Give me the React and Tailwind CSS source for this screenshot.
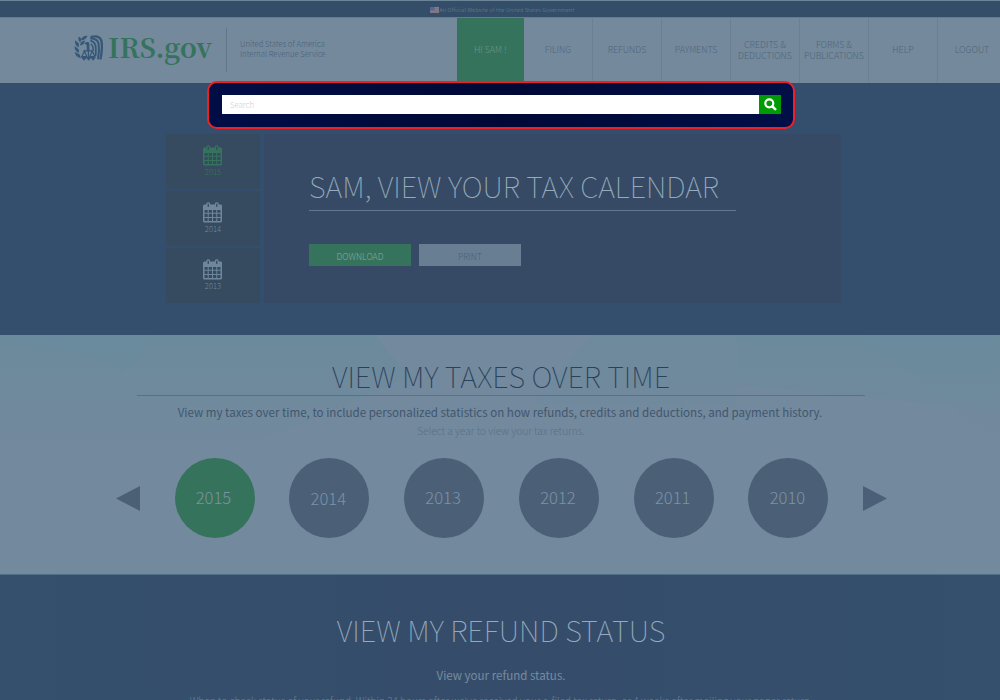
const NAV = [
  { lines: ['FILING'], width: 'w-[69px]' },
  { lines: ['REFUNDS'], width: 'w-[69px]' },
  { lines: ['PAYMENTS'], width: 'w-[69px]' },
  { lines: ['CREDITS &', 'DEDUCTIONS'], width: 'w-[69px]' },
  { lines: ['FORMS &', 'PUBLICATIONS'], width: 'w-[69px]' },
  { lines: ['HELP'], width: 'w-[69px]' },
  { lines: ['LOGOUT'], width: 'w-[69px]' },
];

const CALENDARS = [
  { year: '2015', tone: 'text-[#36735c]' },
  { year: '2014', tone: 'text-[#6f879b]' },
  { year: '2013', tone: 'text-[#6f879b]' },
];

const YEARS = ['2015', '2014', '2013', '2012', '2011', '2010'];

function Flag() {
  return (
    <svg className="h-[6px] w-[9px]" viewBox="0 0 9 6">
      <rect width="9" height="6" fill="#84848f" />
      <path d="M0 1.2h9M0 3.2h9M0 5.2h9" stroke="#7c6673" strokeWidth="0.8" />
      <rect width="4.5" height="3.4" fill="#4a6aa0" />
    </svg>
  );
}

function Eagle() {
  return (
    <svg className="h-[26px] w-[29px]" viewBox="0 0 29 26" fill="none" stroke="#365777" strokeLinecap="round">
      <g fill="#365777" stroke="none">
        <path d="M1 5.200l4 3.200L4.600 12.400C2 11 .6 8.500 1 5.200z" />
        <path d="M.6 11l4.200 3.500v3.500C1.800 16.800.4 14.300.6 11z" />
        <path d="M1 17l4.700 2.500 1.200 3.400C3.400 22.700 1.200 20.500 1 17z" />
        <path d="M4.700 1.500L7 3.300 6.500 8C4.400 6.200 3.900 4.100 4.700 1.500z" />
        <path d="M13.500.8c-3.600-.2-6 1.300-6.600 4.600C10 5.500 12.300 4.100 13.500.8z" />
        <path d="M11 5.600C8.200 6 6.300 7.700 6.100 10.600 9 10.200 10.600 8.600 11 5.600z" />
        <path d="M10.600 8.800c1-1.800 3-2.200 4.600-1.200l.3 8.100h-2.700l-.2-5.700z" />
        <path d="M7 22.300l3 3.400 2.500-2.800 2 2.800 2.500-2.800 2 2.800 3-3.400-3-.4H9.700z" />
      </g>
      <path d="M9.800 15.800h9M14.400 15.500v8M10.400 16l-2.600 5.600h5zM18.300 16l-2.500 5.600h5z" strokeWidth="1.200" />
      <path d="M17.500 1.800C22 .8 26 2 27.300 5.500c1 4.500.8 10.500-.7 18" strokeWidth="2.300" />
      <path d="M17 3.400c4 0 7 2 7.600 5.400.7 4.800.5 9.300-.6 14.700" strokeWidth="2" />
      <path d="M17 5.800c2.800.8 4.500 3 4.700 6.500.3 3.500.2 6-.2 8" strokeWidth="1.800" />
      <path d="M17.200 9.400c1.500 1 2 3 2 5.800" strokeWidth="1.500" />
    </svg>
  );
}

function CalendarIcon() {
  return (
    <svg className="mr-px h-[21px] w-[19px]" viewBox="0 0 19 21" fill="currentColor">
      <path
        fillRule="evenodd"
        d="M1.500 2.500h16A1.400 1.400 0 0 1 19 4v15a1.500 1.500 0 0 1-1.500 1.500h-16A1.500 1.500 0 0 1 0 19V4a1.500 1.500 0 0 1 1.500-1.500z
           M1.500 7.900v2.900h3.200V7.900z M5.700 7.900v2.900h3.300V7.900z M10 7.900v2.900h3.300V7.900z M14.300 7.900v2.900h3.200V7.900z
           M1.500 11.800v3.300h3.200v-3.300z M5.700 11.800v3.300h3.300v-3.300z M10 11.800v3.300h3.300v-3.300z M14.300 11.800v3.300h3.200v-3.300z
           M1.500 16.100v3h3.200v-3z M5.700 16.100v3h3.300v-3z M10 16.100v3h3.300v-3z M14.300 16.100v3h3.200v-3z"
      />
      <rect x="3.300" y="0.300" width="3.900" height="5.900" rx="1.600" />
      <rect x="11.800" y="0.300" width="3.900" height="5.900" rx="1.600" />
      <rect x="4.600" y="1.500" width="1.300" height="3.500" rx="0.500" fill="#364a60" />
      <rect x="13.100" y="1.500" width="1.300" height="3.500" rx="0.500" fill="#364a60" />
    </svg>
  );
}

function SearchIcon() {
  return (
    <svg className="h-[13px] w-[13px]" viewBox="0 0 13 13" fill="none" stroke="#fff">
      <circle cx="5.300" cy="5.300" r="4" strokeWidth="2.200" />
      <path d="M8.600 8.600l2.600 2.600" strokeWidth="2.600" strokeLinecap="round" />
    </svg>
  );
}

function TopBar() {
  return (
    <div className="flex h-[17px] items-center justify-center gap-[1px] border-t border-[#6d8599] bg-[#344e69] pt-[2px] pl-[4px]">
      <Flag />
      <span className="text-[5.400px] font-light leading-[8px] tracking-[0.190px] text-[#6f879b]">
        An Official Website of the United States Government
      </span>
    </div>
  );
}

function Header() {
  return (
    <header className="flex h-[66px] border-t border-[#647d92] bg-[#74899c]">
      <div className="flex w-[457px] shrink-0 pl-[74px]">
        <div className="pt-[17px]">
          <Eagle />
        </div>
        <div className="ml-[5px] pt-[9px] font-['Noto_Serif_CJK_SC','DejaVu_Serif',serif] text-[27px] font-bold leading-[40px] text-[#36735c]">
          IRS.gov
        </div>
        <div className="mt-[10px] ml-auto h-[44px] w-px bg-[#5f778c]" />
        <div className="mr-[131px] ml-[13px] w-[86px] pt-[21px] text-[7.700px] font-light leading-[9.500px] whitespace-nowrap text-[#4a637b]">
          United States of America
          <br />
          Internal Revenue Service
        </div>
      </div>
      <nav className="flex text-center text-[8.850px] font-light leading-[10.800px] text-[#50667a]">
        <div className="mb-px flex w-[66.500px] items-center justify-center bg-[#36735c] text-[#6b948e]">HI SAM !</div>
        {NAV.map((item) => (
          <div
            key={item.lines[0]}
            className={`flex shrink-0 flex-col items-center justify-center border-r border-[#6a8195] pl-px whitespace-nowrap ${item.width}`}
          >
            {item.lines.map((line) => (
              <span key={line}>{line}</span>
            ))}
          </div>
        ))}
      </nav>
    </header>
  );
}

function SearchPanel() {
  return (
    <div className="absolute top-[81px] left-[207px] flex h-[48px] w-[588px] rounded-[10px] border-2 border-[#ec2027] bg-linear-to-r from-[#000e46] via-[#000935] to-[#000f47] pt-[12px] pr-[12px] pl-[13px]">
      <div className="h-[19px] flex-1 bg-white pl-[8px] text-[7.800px] font-light leading-[19px] text-[#cfcfcf]">Search</div>
      <div className="flex h-[19px] w-[22px] items-center justify-center bg-[#009a05]">
        <SearchIcon />
      </div>
    </div>
  );
}

function Hero() {
  return (
    <section className="flex h-[252px] gap-[4px] bg-[#344f6d] pt-[51px] pl-[166px]">
      <div className="flex w-[94px] flex-col gap-[2px]">
        {CALENDARS.map((c) => (
          <div key={c.year} className={`flex h-[55px] flex-col items-center bg-[#364a60] pt-[11px] ${c.tone}`}>
            <CalendarIcon />
            <span className="text-[7.700px] font-light leading-[12px]">{c.year}</span>
          </div>
        ))}
      </div>
      <div className="h-[169px] w-[577px] bg-[#364a65] pl-[45px]">
        <h1 className="w-[427px] border-b border-[#5f788d] pt-[33px] pb-[7px] text-[29.100px] font-thin leading-[36px] whitespace-nowrap text-[#95aabb]">
          SAM, VIEW YOUR TAX CALENDAR
        </h1>
        <div className="mt-[32.500px] flex gap-[8px] text-[8.660px] font-light leading-[25px]">
          <div className="h-[22px] w-[102px] bg-[#36735c] text-center text-[#86a9a0]">DOWNLOAD</div>
          <div className="h-[22px] w-[102px] bg-[#687e92] text-center text-[#4b6177]">PRINT</div>
        </div>
      </div>
    </section>
  );
}

function Taxes() {
  return (
    <section className="relative flex h-[240px] flex-col items-center border-b border-[#4f6f89] bg-[#73899d] pl-[2px]">
      <svg className="absolute inset-0 h-[239px] w-[1000px]" viewBox="0 0 1000 239">
        <defs>
          <linearGradient id="haze" gradientUnits="userSpaceOnUse" x1="0" y1="0" x2="0" y2="110">
            <stop offset="0" stopColor="#5f8c9c" stopOpacity="0.400" />
            <stop offset="1" stopColor="#5f8c9c" stopOpacity="0" />
          </linearGradient>
        </defs>
        <g fill="url(#haze)">
          <path d="M0 0H375L395 25 410 42 250 110H0z" />
          <path d="M0 0H155L122 38 100 22z" opacity="0.500" />
          <path d="M592 0H738V70H530L562 36z" opacity="0.700" />
          <path d="M738 0H1000V75L738 50z" />
          <path d="M860 0H1000V110z" opacity="0.400" />
        </g>
      </svg>
      <h2 className="relative mt-[22px] text-[29.050px] font-thin leading-[36px] text-[#2b4059]">VIEW MY TAXES OVER TIME</h2>
      <div className="relative mt-[2px] h-px w-[728px] bg-[#43806f]" />
      <p className="relative mt-[6px] mr-[2px] text-[11.550px] leading-[20px] text-[#41576e]">
        View my taxes over time, to include personalized statistics on how refunds, credits and deductions, and payment history.
      </p>
      <p className="relative text-[10.100px] font-light leading-[17px] text-[#5a7187]">Select a year to view your tax returns.</p>
      <div className="relative mt-[19px] ml-px flex items-center gap-[34.800px]">
        <svg className="h-[25px] w-[24px]" viewBox="0 0 24 25">
          <path d="M24 0v25L0 12.500z" fill="#4b6077" />
        </svg>
        {YEARS.map((y, i) => (
          <div
            key={y}
            className={`flex h-[80px] w-[80px] items-center justify-center rounded-full pr-[2px] text-[16.600px] font-light leading-[20px] text-[#7c92a5] ${i === 0 ? 'bg-[#36735c]' : 'bg-[#4b6077]'} ${i === 1 ? 'pb-px' : 'pb-[3px]'}`}
          >
            {y}
          </div>
        ))}
        <svg className="h-[25px] w-[24px]" viewBox="0 0 24 25">
          <path d="M0 0v25l24-12.500z" fill="#4b6077" />
        </svg>
      </div>
    </section>
  );
}

function Refund() {
  return (
    <section className="flex h-[125px] flex-col items-center bg-linear-to-r from-[#34506d] via-[#354c6a] to-[#34506d] pt-[36px] pl-[2px]">
      <h2 className="text-[29.200px] font-thin leading-[36px] text-[#95aabb]">VIEW MY REFUND STATUS</h2>
      <div className="mt-[5px] h-px w-[728px] bg-[#5f7a8e]" />
      <p className="mt-[13px] text-[11.550px] leading-[20px] text-[#768da0]">View your refund status.</p>
      <p className="mt-[7px] text-[10.060px] font-light leading-[18px] whitespace-nowrap text-[#6a8297]">
        When to check status of your refund: Within 24 hours after we've received your e-filed tax return; or 4 weeks after mailing your
        paper return.
      </p>
    </section>
  );
}

export default function App() {
  return (
    <div className="relative h-[700px] w-[1000px] overflow-hidden bg-[#344f6d] font-['Noto_Sans_CJK_SC',sans-serif]">
      <TopBar />
      <Header />
      <Hero />
      <Taxes />
      <Refund />
      <SearchPanel />
    </div>
  );
}
